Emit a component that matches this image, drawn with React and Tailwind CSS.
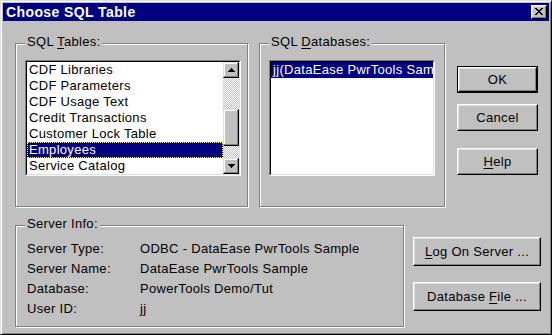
import React from "react";

function Btn({ children, className = "", def = false }) {
  const bevel = (
    <div className="flex h-full w-full items-center justify-center border border-t-white border-l-white border-r-black border-b-black bg-[#c0c0c0] shadow-[inset_-1px_-1px_0_#808080,inset_1px_1px_0_#dfdfdf] text-[13px] leading-[16px] tracking-[0.3px] text-black">
      <span className="whitespace-pre">{children}</span>
    </div>
  );
  if (def) {
    return <div className={`border border-black ${className}`}>{bevel}</div>;
  }
  return <div className={className}>{bevel}</div>;
}

function Group({ label, className = "", children }) {
  return (
    <div className={`relative border border-[#808080] shadow-[inset_1px_1px_0_#fff,1px_1px_0_#fff] ${className}`}>
      <span className="absolute left-[9px] top-[-10px] bg-[#c0c0c0] px-[2px] text-[13px] leading-[16px] tracking-[0.3px] text-black whitespace-nowrap">
        {label}
      </span>
      {children}
    </div>
  );
}

function Arrow({ down = false }) {
  return (
    <svg width="7" height="4" viewBox="0 0 7 4" className={down ? "rotate-180" : ""} shapeRendering="crispEdges">
      <path d="M3 0h1v1h1v1h1v1h1v1H0V3h1V2h1V1h1z" fill="#000" />
    </svg>
  );
}

function ScrollBtn({ children, className = "" }) {
  return (
    <div className={`flex h-[16px] w-[16px] items-center justify-center border border-t-[#dfdfdf] border-l-[#dfdfdf] border-r-black border-b-black bg-[#c0c0c0] shadow-[inset_-1px_-1px_0_#808080,inset_1px_1px_0_#fff] ${className}`}>
      {children}
    </div>
  );
}

function Sunken({ className = "", children }) {
  return (
    <div className={`border border-t-[#808080] border-l-[#808080] border-r-white border-b-white ${className}`}>
      <div className="h-full w-full border border-t-black border-l-black border-r-[#dfdfdf] border-b-[#dfdfdf] bg-white overflow-hidden">
        {children}
      </div>
    </div>
  );
}

const U = ({ children }) => <span className="underline underline-offset-[2px] decoration-1">{children}</span>;

export default function App() {
  const tables = [
    "CDF Libraries",
    "CDF Parameters",
    "CDF Usage Text",
    "Credit Transactions",
    "Customer Lock Table",
    "Employees",
    "Service Catalog",
  ];
  const info = [
    ["Server Type:", "ODBC - DataEase PwrTools Sample"],
    ["Server Name:", "DataEase PwrTools Sample"],
    ["Database:", "PowerTools Demo/Tut"],
    ["User ID:", "jj"],
  ];
  return (
    <div className="font-['Liberation_Sans',Arial,sans-serif] text-black">
      <div className="flex h-[335px] w-[552px] flex-col border border-t-[#dfdfdf] border-l-[#dfdfdf] border-r-black border-b-black bg-[#c0c0c0] p-[2px] shadow-[inset_1px_1px_0_#fff,inset_-1px_-1px_0_#808080]">
        {/* Title bar */}
        <div className="flex h-[18px] items-center justify-between bg-[#000080] pl-[3px] pr-[2px]">
          <span className="text-[14px] font-bold leading-[18px] tracking-[0.4px] text-white">Choose SQL Table</span>
          <div className="flex h-[14px] w-[16px] items-center justify-center border border-t-white border-l-white border-r-black border-b-black bg-[#c0c0c0] shadow-[inset_-1px_-1px_0_#808080,inset_1px_1px_0_#dfdfdf]">
            <svg width="8" height="7" viewBox="0 0 8 7" shapeRendering="crispEdges" className="mt-[-1px] ml-[-1px]">
              <path
                d="M0 0h2v1H0zM6 0h2v1H6zM1 1h2v1H1zM5 1h2v1H5zM2 2h4v1H2zM3 3h2v1H3zM2 4h4v1H2zM1 5h2v1H1zM5 5h2v1H5zM0 6h2v1H0zM6 6h2v1H6z"
                fill="#000"
              />
            </svg>
          </div>
        </div>

        {/* Body */}
        <div className="flex flex-col pl-[12px] pt-[22px]">
          {/* Top row */}
          <div className="flex items-start">
            <Group label={<>SQL <U>T</U>ables:</>} className="h-[164px] w-[233px]">
              <Sunken className="ml-[9px] mt-[16px] h-[116px] w-[216px]">
                <div className="flex h-full">
                  <div className="flex-1 overflow-hidden">
                    {tables.map((t) =>
                      t === "Employees" ? (
                        <div
                          key={t}
                          className="h-[16px] border border-dotted border-[#ffff00] bg-[#000080] pl-[1px] text-[13px] leading-[14px] tracking-[0.3px] text-white whitespace-nowrap"
                        >
                          {t}
                        </div>
                      ) : (
                        <div key={t} className="h-[16px] pl-[2px] text-[13px] leading-[16px] tracking-[0.3px] whitespace-nowrap">
                          {t}
                        </div>
                      )
                    )}
                  </div>
                  <div className="flex w-[16px] flex-col">
                    <ScrollBtn>
                      <Arrow />
                    </ScrollBtn>
                    <div className="flex-1 bg-[repeating-conic-gradient(#fff_0%_25%,#c0c0c0_0%_50%)] bg-[length:2px_2px] pt-[31px]">
                      <div className="h-[37px] w-[16px] border border-t-[#dfdfdf] border-l-[#dfdfdf] border-r-black border-b-black bg-[#c0c0c0] shadow-[inset_-1px_-1px_0_#808080,inset_1px_1px_0_#fff]" />
                    </div>
                    <ScrollBtn>
                      <Arrow down />
                    </ScrollBtn>
                  </div>
                </div>
              </Sunken>
            </Group>

            <Group label={<>SQL <U>D</U>atabases:</>} className="ml-[11px] h-[164px] w-[186px]">
              <Sunken className="ml-[9px] mt-[16px] h-[116px] w-[166px]">
                <div className="h-[16px] overflow-hidden bg-[#000080] pl-[2px] text-[13px] leading-[16px] tracking-[0.3px] text-white whitespace-nowrap">
                  jj(DataEase PwrTools Sample)
                </div>
              </Sunken>
            </Group>

            <div className="ml-[12px] mt-[23px] flex w-[81px] flex-col">
              <Btn def className="h-[27px]">OK</Btn>
              <Btn className="mt-[11px] h-[27px]">Cancel</Btn>
              <Btn className="mt-[17px] h-[27px]">
                <U>H</U>elp
              </Btn>
            </div>
          </div>

          {/* Bottom row */}
          <div className="mt-[18px] flex items-start">
            <Group label="Server Info:" className="h-[102px] w-[389px]">
              <div className="grid grid-cols-[113px_1fr] pl-[11px] pt-[13px] text-[13px] leading-[20px] tracking-[0.3px]">
                {info.map(([k, v]) => (
                  <React.Fragment key={k}>
                    <div className="whitespace-nowrap">{k}</div>
                    <div className="whitespace-nowrap">{v}</div>
                  </React.Fragment>
                ))}
              </div>
            </Group>
            <div className="ml-[9px] mt-[12px] flex w-[128px] flex-col">
              <Btn className="h-[29px]">
                <U>L</U>og On Server ...
              </Btn>
              <Btn className="mt-[16px] h-[29px]">
                {"Database "}
                <U>F</U>
                {"ile ..."}
              </Btn>
            </div>
          </div>
        </div>
      </div>
    </div>
  );
}
